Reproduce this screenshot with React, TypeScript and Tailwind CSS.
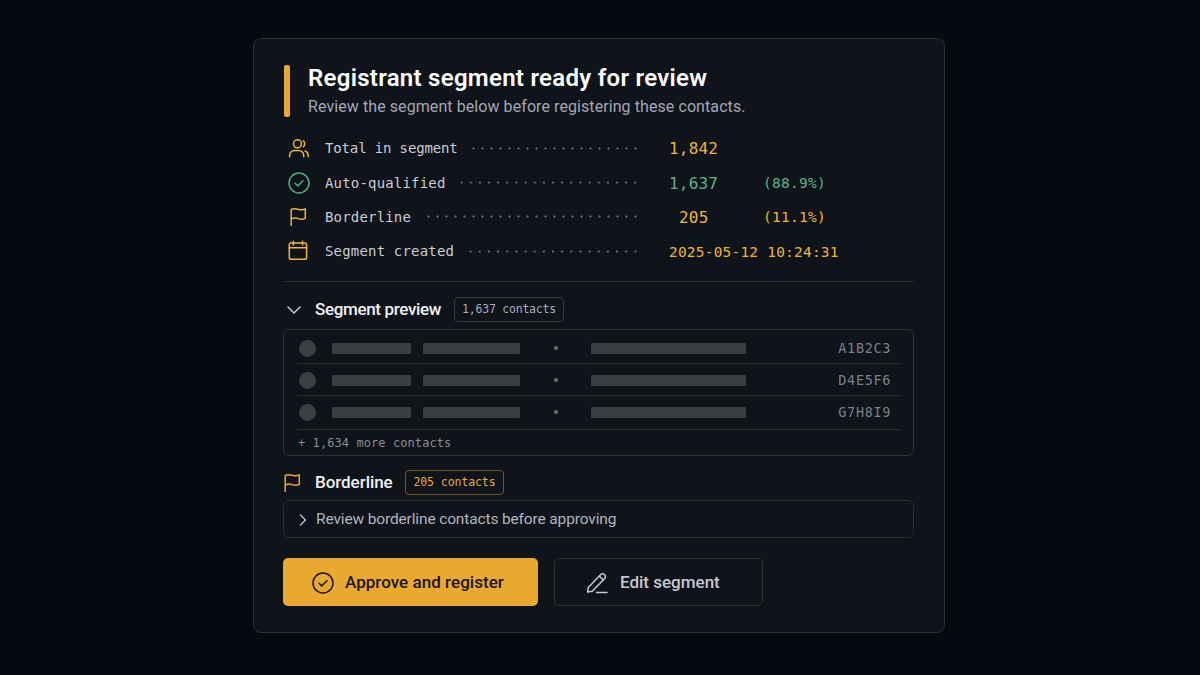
import type { ReactNode } from 'react';

interface IconProps {
  className?: string;
}

function UsersIcon({ className }: IconProps) {
  return (
    <svg className={className} fill="none" stroke="currentColor" strokeWidth={1.5} strokeLinecap="round" viewBox="0 0 24 24">
      <circle cx="10.5" cy="7.8" r="4" />
      <path d="M2.6 20.8v-1.3a4.9 4.9 0 0 1 4.9-4.9h4.3a4.9 4.9 0 0 1 4.9 4.9v1.3" />
      <path d="M16.2 4.900a3.6 3.6 0 0 1 0 5.9M18 15a4.6 4.6 0 0 1 3.2 4.2v1.6" />
    </svg>
  );
}

function CheckCircleIcon({ className }: IconProps) {
  return (
    <svg className={className} fill="none" stroke="currentColor" strokeWidth={1.5} strokeLinecap="round" strokeLinejoin="round" viewBox="0 0 24 24">
      <circle cx="12" cy="12" r="10" />
      <path d="M8 12.2l2.8 2.7 5.2-5.2" />
    </svg>
  );
}

function FlagIcon({ className }: IconProps) {
  return (
    <svg className={className} fill="none" stroke="currentColor" strokeWidth={1.5} strokeLinecap="round" strokeLinejoin="round" viewBox="0 0 24 24">
      <path d="M4.2 20.6V4.5c2.3-1.3 4.6-1 6.8-.3s4.6.9 7.3-.3v9.5c-2.7 1.2-5.1 1-7.3.2s-4.500-.7-6.800.5" />
    </svg>
  );
}

function CalendarIcon({ className }: IconProps) {
  return (
    <svg className={className} fill="none" stroke="currentColor" strokeWidth={1.5} strokeLinecap="round" strokeLinejoin="round" viewBox="0 0 24 24">
      <rect x="2.3" y="4" width="17.3" height="16.3" rx="1.8" />
      <path d="M2.3 8.8h17.3M6.4 2.3v3.6M15.5 2.3v3.6" />
    </svg>
  );
}

function PencilIcon({ className }: IconProps) {
  return (
    <svg className={className} fill="none" stroke="currentColor" strokeWidth={1.5} strokeLinecap="round" strokeLinejoin="round" viewBox="0 0 24 24">
      <path d="M2.6 21l.7-4.6L15.8 3.500a2.5 2.5 0 0 1 3.6 0l.3.300a2.5 2.5 0 0 1 0 3.6L7.2 20.200z" />
      <path d="M14.3 5.1l3.9 3.9" />
      <path d="M11.5 21.5h10.5" />
    </svg>
  );
}

interface StatRowProps {
  icon: ReactNode;
  label: ReactNode;
  leader: string;
  children: ReactNode;
}

function StatRow({ icon, label, leader, children }: StatRowProps) {
  return (
    <div className="h-[34.4px] flex items-center">
      <div className="w-[38px] ml-1 shrink-0">{icon}</div>
      <div className="w-[315px] flex items-center shrink-0">
        <span className="text-sm tracking-[0.18px] text-[#c9cdd4] whitespace-nowrap">{label}</span>
        <span
          className={`h-[9px] ml-auto bg-[radial-gradient(circle,#66696e_0.7px,transparent_1.5px)] bg-[length:9px_9px] bg-repeat-round ${leader}`}
        />
      </div>
      <div className="ml-[29px] pt-0.5 flex items-center whitespace-nowrap">{children}</div>
    </div>
  );
}

interface ContactRowProps {
  code: string;
  className: string;
}

function ContactRow({ code, className }: ContactRowProps) {
  return (
    <div className={`flex items-center border-b border-[#2a2d30] ${className}`}>
      <span className="size-[17px] ml-0.5 rounded-full bg-[#3c3f43]" />
      <span className="w-[79px] h-[11px] ml-4 rounded-[1px] bg-[#3a3d40]" />
      <span className="w-[97px] h-[11px] ml-3 rounded-[1px] bg-[#3a3d40]" />
      <span className="size-1 ml-[34px] rounded-full bg-[#6f7276]" />
      <span className="w-[155px] h-[11px] ml-[33px] rounded-[1px] bg-[#3a3d40]" />
      <span className="ml-auto mr-[9px] pt-px text-[13.5px] tracking-[0.65px] text-[#7c8089]">{code}</span>
    </div>
  );
}

const contacts = [
  { code: 'A1B2C3', className: 'h-[34px] pt-[3px]' },
  { code: 'D4E5F6', className: 'h-8 pt-px' },
  { code: 'G7H8I9', className: 'h-[34px] pb-px' },
];

export default function App() {
  return (
    <div className="h-screen overflow-hidden flex items-start justify-center pt-[38px] pr-0.5 bg-[#060910] font-['Roboto',sans-serif]">
      <div className="w-[692px] h-[595px] flex flex-col pl-[29px] pr-[30px] pt-[26px] rounded-lg border border-[#2d3033] bg-[#0f131a]">
        {/* Header */}
        <div className="h-[52px] flex shrink-0">
          <div className="w-1.5 ml-px rounded-[2px] bg-[#e9a92f]" />
          <div className="ml-[18px]">
            <h1 className="text-2xl leading-[26px] font-semibold tracking-[0.28px] text-white whitespace-nowrap">
              Registrant segment ready for review
            </h1>
            <p className="mt-1 text-base leading-[23px] tracking-[0.08px] text-[#a3a8b3] whitespace-nowrap">
              Review the segment below before registering these contacts.
            </p>
          </div>
        </div>

        {/* Stats */}
        <div className="h-[151px] mt-3.5 border-b border-[#2a2d30] shrink-0 font-['DejaVu_Sans_Mono',monospace] text-[#edb43c]">
          <StatRow
            icon={<UsersIcon className="size-6" />}
            label={<span className="tracking-[-0.14px]">Total in segment</span>}
            leader="w-[171px]"
          >
            <span className="text-base tracking-[0.2px]">1,842</span>
          </StatRow>
          <StatRow icon={<CheckCircleIcon className="size-6 text-[#4fae7c]" />} label="Auto-qualified" leader="w-[183px]">
            <span className="w-[94px] text-base tracking-[0.2px] text-[#58b685]">1,637</span>
            <span className="text-[14.5px] tracking-[0.27px] text-[#58b685]">(88.9%)</span>
          </StatRow>
          <StatRow icon={<FlagIcon className="size-6" />} label="Borderline" leader="w-[216px]">
            <span className="w-[94px] pl-2.5 text-base tracking-[0.2px]">205</span>
            <span className="text-[14.5px] tracking-[0.27px]">(11.1%)</span>
          </StatRow>
          <StatRow icon={<CalendarIcon className="size-6" />} label="Segment created" leader="w-[174px]">
            <span className="pt-px text-[14.5px] tracking-[0.2px]">2025-05-12 10:24:31</span>
          </StatRow>
        </div>

        {/* Segment preview */}
        <div className="h-[25px] mt-[15px] flex items-center shrink-0">
          <svg className="w-3.5 h-2 ml-1 text-[#c5c8ce]" fill="none" stroke="currentColor" strokeWidth={1.5} strokeLinecap="round" strokeLinejoin="round" viewBox="0 0 14 8">
            <path d="M1 1l6 6 6-6" />
          </svg>
          <h2 className="w-[139px] ml-3.5 text-[17px] font-medium tracking-[-0.34px] text-[#f1f2f4] whitespace-nowrap">
            Segment preview
          </h2>
          <span className="w-[110px] h-[25px] flex items-center justify-center rounded border border-[#35383c] font-['DejaVu_Sans_Mono',monospace] text-[11.5px] leading-[23px] tracking-[-0.22px] text-[#a9adb6] whitespace-nowrap">
            1,637 contacts
          </span>
        </div>
        <div className="h-[127px] mt-[7px] px-[13px] rounded-md border border-[#303336] shrink-0 font-['DejaVu_Sans_Mono',monospace]">
          {contacts.map((contact) => (
            <ContactRow key={contact.code} {...contact} />
          ))}
          <p className="pl-px text-xs leading-[26px] tracking-[0.08px] text-[#888c94]">+ 1,634 more contacts</p>
        </div>

        {/* Borderline */}
        <div className="h-[25px] mt-3.5 flex items-center shrink-0">
          <FlagIcon className="size-6 -ml-[2.5px] text-[#e9a92f]" />
          <h2 className="w-[90px] ml-[10.5px] text-[17px] font-medium tracking-[-0.05px] text-[#f1f2f4]">Borderline</h2>
          <span className="w-[99px] h-[25px] flex items-center justify-center rounded border border-[#735720] font-['DejaVu_Sans_Mono',monospace] text-[11.5px] leading-[23px] tracking-[-0.08px] text-[#e9ac38] whitespace-nowrap">
            205 contacts
          </span>
        </div>
        <button className="h-[38px] mt-[5px] pt-px flex items-center rounded-md border border-[#292c30] text-[15.5px] tracking-[-0.14px] text-[#b0b5bf] shrink-0">
          <svg className="w-2 h-3 ml-[15px] mr-[9px]" fill="none" stroke="currentColor" strokeWidth={1.5} strokeLinecap="round" strokeLinejoin="round" viewBox="0 0 8 12">
            <path d="M1.500 1l5 5-5 5" />
          </svg>
          Review borderline contacts before approving
        </button>

        {/* Actions */}
        <div className="mt-5 flex gap-4">
          <button className="w-[255px] h-12 pt-px pl-[27.5px] flex items-center rounded-[5px] bg-[#e9a92f] text-[17px] font-medium tracking-[0.04px] text-[#1a1408]">
            <CheckCircleIcon className="size-6 mr-[10.5px]" />
            Approve and register
          </button>
          <button className="w-[209px] h-12 pt-px pl-[30px] flex items-center rounded-[5px] border border-[#2b2e32] text-[17px] font-medium text-[#c5c9d3]">
            <PencilIcon className="size-6 mr-[11px]" />
            Edit segment
          </button>
        </div>
      </div>
    </div>
  );
}
